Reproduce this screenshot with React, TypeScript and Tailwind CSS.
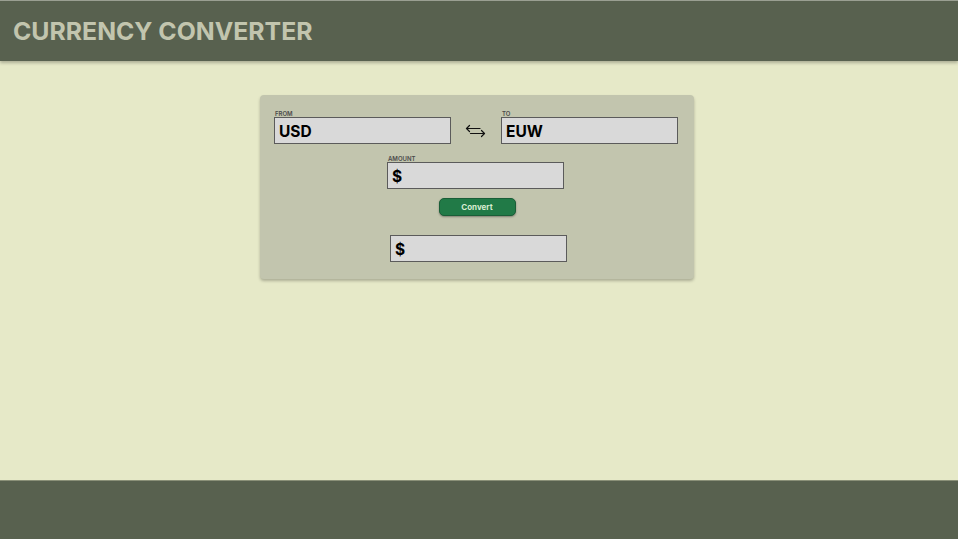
import React from 'react'

function SwapIcon() {
    return (
        <svg width="21" height="14" viewBox="0 0 21 14" fill="none" stroke="#111" strokeWidth="1.2" strokeLinecap="round" strokeLinejoin="round">
            <path d="M15 4.5H1.5" />
            <path d="M4.5 1.5 1.5 4.5l3 3" />
            <path d="M5.5 9.5h14" />
            <path d="M16.5 6.5l3 3-3 3" />
        </svg>
    )
}

function Field({ label, value }: { label?: string; value: string }) {
    return (
        <div className="flex flex-col">
            {label && (
                <span className="text-[6px] font-semibold leading-[8px] text-[#4a4a4a] ml-[1px] mb-[-1px] uppercase">
                    {label}
                </span>
            )}
            <div className="w-[177px] h-[27px] bg-[#d9d9d9] border border-[#5b5b5b] flex items-center px-[4px] pt-[2px] text-[15.5px] font-bold text-black">
                {value}
            </div>
        </div>
    )
}

export default function App() {
    return (
        <div className="min-h-screen flex flex-col bg-[#e6e9c8]" style={{ fontFamily: 'Inter, "Noto Sans", sans-serif' }}>
            <header className="h-[61px] bg-[#58614f] border-t border-[#9a9f92] shadow-[0_2px_3px_rgba(0,0,0,0.25)] flex items-center px-[13px] pt-[2px] z-10">
                <h1 className="text-[24.8px] font-bold text-[#c2c5ae]">CURRENCY CONVERTER</h1>
            </header>

            <main className="flex-1 pt-[34px] flex justify-center pr-[4px]">
                <div className="w-[434px] h-[184px] bg-[#c2c5ae] rounded-[4px] shadow-[0_2px_3px_rgba(0,0,0,0.25)] pl-[14px] pr-[16px] pt-[15px] flex flex-col items-center">
                    <div className="w-full flex items-end justify-between">
                        <Field label="From" value="USD" />
                        <div className="h-[27px] flex items-center mr-[1px]">
                            <SwapIcon />
                        </div>
                        <Field label="To" value="EUW" />
                    </div>

                    <div className="mt-[11px] mr-[1px]">
                        <Field label="Amount" value="$" />
                    </div>

                    <button className="mt-[9px] ml-[2px] w-[77px] h-[18px] rounded-[5px] bg-[#217a47] border border-[#1a5e37] shadow-[0_1px_2px_rgba(0,0,0,0.35)] text-[8px] font-bold text-[#d8ecd0]">
                        Convert
                    </button>

                    <div className="mt-[19px] ml-[5px]">
                        <Field value="$" />
                    </div>
                </div>
            </main>

            <footer className="h-[59px] bg-[#58614f] border-t border-[#8a9078]" />
        </div>
    )
}
